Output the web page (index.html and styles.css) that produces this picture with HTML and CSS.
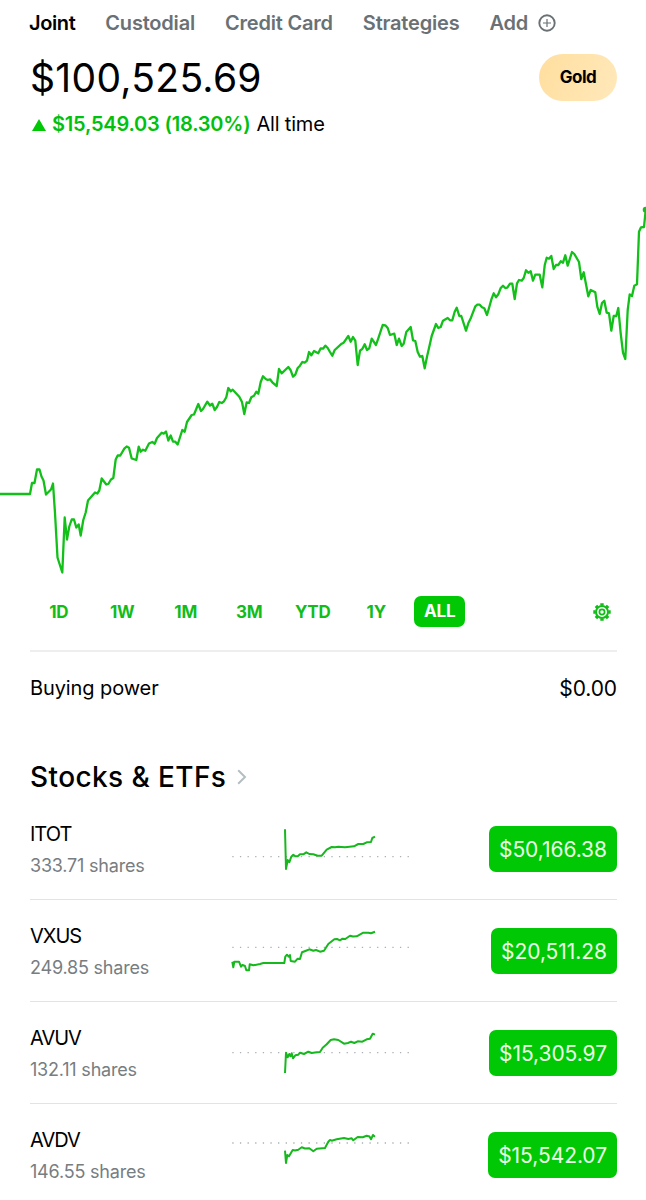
FILE: index.html
```html
<!DOCTYPE html>
<html lang="en">
<head>
  <meta charset="UTF-8">
  <meta name="viewport" content="width=device-width, initial-scale=1.0">
  <title>Portfolio</title>
  <link rel="stylesheet" href="styles.css">
</head>
<body>
  <nav class="tabs">
    <a class="tab active">Joint</a>
    <a class="tab">Custodial</a>
    <a class="tab">Credit Card</a>
    <a class="tab">Strategies</a>
    <a class="tab tab-add">Add
      <svg class="add-icon" viewBox="0 0 18 18">
        <circle cx="9" cy="9" r="7.7" stroke-width="1.9"/>
        <path d="M9 5v8M5 9h8" stroke-width="1.2"/>
      </svg>
    </a>
  </nav>

  <header class="balance">
    <h1 class="amount">$100,525.69</h1>
    <button class="gold-button">Gold</button>
  </header>
  <div class="change">
    <svg class="up-icon" viewBox="0 0 14 12"><path d="M7 0l7 12H0z"/></svg>
    <span class="gain">$15,549.03 (18.30%)</span>
    <span class="period">All time</span>
  </div>

  <svg class="chart" viewBox="0 142 646 448">
    <polyline points="0,494 30,494 32,483 34.5,483 37,469.5 39.5,469.5 41.5,476.5 43.5,480.5 46,494.5 51,489.5 53,483.5 55,513 57.5,557.5 62.3,572.5 64.7,517.5 67,539.5 69.3,526.5 71.7,519.5 74,519.5 76.3,527.5 78.7,524.5 80.7,535.5 83.3,520 85.7,512.5 88,500.5 95,492.5 97.3,493.5 99.3,490.5 101.7,478.5 106.3,484.5 108.3,484 111,479.5 113.3,478 115.7,459.5 117.7,455.5 120.3,455.5 124.3,448.7 126.7,446.5 129,447.7 131.7,458.5 136.3,460 138.7,446.7 140.7,451.7 143,449.7 145.3,450.7 149,443.5 152.3,442 154.7,443.7 157,438 161.7,432.7 163.7,433.7 166,431.5 168.3,440.5 170.7,435.5 173,441.7 175.3,441.7 177.7,444.5 182.3,430 184.7,431.7 187,422 191.7,415 194,414.5 198.3,404 201,411 203,409 207.3,401.7 210,405.5 212.3,403.7 214.7,410 217,407 219.3,402 221.7,403 224,401.3 226.3,397.3 228.3,388 230.7,391.3 232.7,389.7 239.3,396.7 242,402 244.3,414 246.7,402.3 249,403 251.3,397.3 254,395.7 256.3,391.7 258.3,393.7 260.7,382 263,376.3 265.7,379 267.7,380 270,379.3 272.3,382.3 276.7,386 279,369 281.7,373.3 288.3,367 290.7,370.3 293,376.7 295.3,374.7 297.7,368 300,365.7 302.3,362 304.7,362.7 307,360.7 309,352 311.3,355.3 314,351 318.3,353.3 320.7,348.3 323,348.7 325.3,345.7 327.7,348 330,352 332.3,355.7 334.7,350 341.7,343.7 343.7,342.7 348.3,336 350.7,341.7 353,337 355.3,340.7 357.7,365 360,350.7 362.3,349 364.7,344.3 367,350 369.3,348.3 371.7,338.7 376,345 378.3,338.3 382.7,325 385.3,325.3 387.7,328 390,335 394.3,333.7 396.7,345 399,338.7 401.7,346 403.7,343.7 406.3,332 410.7,327 413,340.3 415.3,341 417.7,352 420,356.7 422.3,356 424.7,368.3 427,356.7 429.3,346.7 431.7,336 436,324 438.3,328 440.7,327 443,320.7 447.7,318 450,320.3 452.3,320.3 454.7,311.7 456.7,307.7 459.3,316 461.3,316 466,330.7 468.3,323.3 471,317.7 475.3,306.3 477.3,304.7 479.7,304.7 482,307.3 484.3,308.3 487,315 489.3,307 491.3,299.7 493.7,293.3 496,297.3 498.3,294.3 500.7,288 503,285.7 505.3,288 507.3,287.7 510,283.7 512.3,283.7 514.7,299 517,283.3 519,280 521.7,280.7 523.7,278 526,270.3 528.3,272.7 530.7,271.3 533,280.7 535.3,274.7 539.7,274.7 542.3,287.3 544.7,265.3 546.7,257.7 549,258.7 551.3,256 553.7,269 556,265 558.3,265 560.7,261.3 563,262.7 565.3,255.3 567.7,265.7 572,252 574.3,254 579,262 581.3,279 583.7,272.3 586,284.3 588.3,296.3 590.7,290 595.3,292.3 597.3,306.7 599.7,314 602,303 604.3,300.7 606.7,312.7 609,313.3 611.3,330.7 613.7,316 616.3,316 618.3,308 620.7,333.3 623,352.7 625.3,359 627.7,310 629.7,294.3 632,296 634.3,285.7 637,284.3 639,231.7 641,227.3 644,227 645.7,210"/>
    <circle cx="645.7" cy="209.7" r="3"/>
  </svg>

  <div class="range-bar">
    <div class="ranges">
      <span class="range">1D</span>
      <span class="range">1W</span>
      <span class="range">1M</span>
      <span class="range">3M</span>
      <span class="range">YTD</span>
      <span class="range">1Y</span>
      <span class="range selected">ALL</span>
    </div>
    <svg class="gear" viewBox="-9 -9 18 18">
      <circle r="6" stroke-width="2"/>
      <circle r="2.6" stroke-width="1.7"/>
      <path stroke-width="3.4" d="M0-6.4v-2.3M0 6.4v2.3M6.4 0h2.3M-6.4 0h-2.3M4.5-4.5l1.6-1.6M-4.5-4.5l-1.6-1.6M4.5 4.5l1.6 1.6M-4.5 4.5l-1.6 1.6"/>
    </svg>
  </div>

  <div class="buying-power">
    <span>Buying power</span>
    <span class="cash">$0.00</span>
  </div>

  <h2 class="section-title">Stocks &amp; ETFs
    <svg class="chevron" viewBox="0 0 10 16"><path d="M1.2 1.2L8 8l-6.8 6.8"/></svg>
  </h2>

  <ul class="holdings">
    <li class="holding">
      <div class="info">
        <div class="symbol">ITOT</div>
        <div class="shares">333.71 shares</div>
      </div>
      <svg class="spark" viewBox="0 0 180 101">
        <path class="baseline" d="M2.3 58.7H179"/>
        <polyline points="55,31.3 56,71 57.7,62 59.3,64.3 61.3,58.7 63.3,56.7 65.3,58.3 67.7,58.3 70,56.3 73.3,56.3 76.3,54.3 79.3,56 83.3,56.3 87.7,57.7 91.7,57.7 96.7,51.7 101.7,49 105,49.3 108.3,48.7 115,49.3 124,48.3 128.3,46 133.3,46 136.7,44.3 141,44 142.3,40 145,38.7"/>
      </svg>
      <button class="price">$50,166.38</button>
    </li>
    <li class="holding">
      <div class="info">
        <div class="symbol">VXUS</div>
        <div class="shares">249.85 shares</div>
      </div>
      <svg class="spark" viewBox="0 0 180 101">
        <path class="baseline" d="M2.3 47.3H179"/>
        <polyline points="2.3,61.7 3.3,67.3 4.3,61.7 9,61.7 11,66.7 12.5,65 15,66 16.3,70.3 19,70.3 19.7,64.3 23.3,65.3 30,64 33.3,63 54.3,63 55.3,56.7 57,54.7 58.7,56.7 60,55 60.7,61 65,61.7 67.7,58.7 70,59 72,52.3 76,50.7 79.3,49.3 83.3,50.7 86,50 90,51.7 94,50.7 98.3,44 104.3,39.3 107,39 110,40.3 112.5,38.7 115.3,39 120,35.7 123,36.5 126.7,36.3 133.3,32.7 138.3,32.7 141,33.3 145,31.7"/>
      </svg>
      <button class="price">$20,511.28</button>
    </li>
    <li class="holding">
      <div class="info">
        <div class="symbol">AVUV</div>
        <div class="shares">132.11 shares</div>
      </div>
      <svg class="spark" viewBox="0 0 180 101">
        <path class="baseline" d="M2.3 50.7H179"/>
        <polyline points="55,71 56,50.7 57.7,55.3 59.3,52 60.5,54.3 61.7,51.3 63,56.3 65.3,53.3 68.3,52.7 70,50.7 74,52 78.3,49.7 81.7,51 86.7,50.3 90,50 92.7,45.7 96.7,42.3 100.7,38 104,37.3 108.3,38 114,41.7 118,41 121,39.7 124.3,41 127.7,39.3 132.3,39.7 136.7,37.3 140,36.7 142.7,31.7 145,32.7"/>
      </svg>
      <button class="price">$15,305.97</button>
    </li>
    <li class="holding">
      <div class="info">
        <div class="symbol">AVDV</div>
        <div class="shares">146.55 shares</div>
      </div>
      <svg class="spark" viewBox="0 0 180 101">
        <path class="baseline" d="M2.3 39H179"/>
        <polyline points="55,46.7 56,59 57.3,51 59,52.3 62.7,46 65,46.5 68.3,45.7 71.7,43.3 75,44.5 79.3,44.3 83.3,47.3 86.7,44.7 95,44 98.3,37.7 100,36 101.7,36.7 106.7,35.3 114,34 118.3,35 121.7,34.3 123.3,36.3 127.7,33 132.7,33.3 136.7,31.7 139.5,32.5 141,35.3 143,31 145,32.7"/>
      </svg>
      <button class="price">$15,542.07</button>
    </li>
  </ul>
</body>
</html>
```
FILE: styles.css
```css
* {
  box-sizing: border-box;
}

body {
  margin: 0;
  height: 1200px;
  overflow: hidden;
  background: #fff;
  color: #000;
  font-family: Inter, Roboto, sans-serif;
}

button {
  border: none;
  font-family: inherit;
}

/* Account tabs */
.tabs {
  display: flex;
  align-items: center;
  gap: 30px;
  height: 46px;
  padding: 0 29px;
}

.tab {
  color: #6a7174;
  font-size: 20px;
  font-weight: 600;
  letter-spacing: -0.2px;
  white-space: nowrap;
}

.tab.active {
  color: #000;
  letter-spacing: -0.4px;
}

.tab-add {
  display: flex;
  align-items: center;
  gap: 10px;
}

.add-icon {
  width: 18px;
  height: 18px;
  fill: none;
  stroke: #6a7174;
}

/* Balance */
.balance {
  display: flex;
  align-items: center;
  justify-content: space-between;
  height: 62px;
  padding: 0 29px 0 30px;
}

.amount {
  margin: 0;
  font-size: 39px;
  font-weight: 400;
  letter-spacing: 0.3px;
}

.gold-button {
  width: 78px;
  height: 47px;
  border-radius: 24px;
  background: linear-gradient(110deg, #ffdf9f, #ffe8ba);
  color: #000;
  font-size: 17px;
  font-weight: 700;
  letter-spacing: -0.5px;
}

.change {
  display: flex;
  align-items: center;
  height: 34px;
  padding: 0 32px 2px;
  font-size: 20px;
  letter-spacing: -0.2px;
}

.up-icon {
  width: 14px;
  height: 12px;
  margin: 2px 6px 0 0;
  fill: #00c805;
}

.gain {
  margin-right: 6px;
  color: #00c010;
  font-weight: 600;
}

/* Portfolio chart */
.chart {
  display: block;
  width: 646px;
  height: 448px;
  fill: none;
  stroke: #12c019;
  stroke-width: 2.3;
  stroke-linejoin: round;
}

.chart circle {
  fill: #12c019;
  stroke: none;
}

.range-bar {
  display: flex;
  align-items: center;
  justify-content: space-between;
  height: 62px;
  margin: 0 29px 0 30px;
  padding: 0 6px 17px 0;
  border-bottom: 2px solid #eee;
}

.ranges {
  display: grid;
  grid-template-columns: repeat(7, 63.5px);
  justify-items: center;
  align-items: center;
  margin-left: -3px;
}

.range {
  color: #12bc19;
  font-size: 17px;
  font-weight: 700;
  letter-spacing: -0.2px;
}

.range.selected {
  width: 51px;
  border-radius: 7px;
  background: #00c805;
  color: #fff;
  line-height: 31px;
  text-align: center;
}

.gear {
  width: 18px;
  height: 18px;
  fill: none;
  stroke: #12bc19;
}

.buying-power {
  display: flex;
  align-items: center;
  justify-content: space-between;
  height: 72px;
  padding: 0 29px 0 30px;
  font-size: 20px;
  letter-spacing: -0.1px;
}

.cash {
  font-size: 21px;
}

/* Holdings */
.section-title {
  display: flex;
  align-items: center;
  gap: 11px;
  height: 40px;
  margin: 33px 30px 1px;
  font-size: 28px;
  font-weight: 500;
  letter-spacing: 0.4px;
}

.chevron {
  width: 10px;
  height: 16px;
  fill: none;
  stroke: #b4bec2;
  stroke-width: 2;
}

.holdings {
  margin: 0;
  padding: 0 29px 0 30px;
  list-style: none;
}

.holding {
  display: flex;
  align-items: center;
  height: 102px;
  border-bottom: 1px solid #dfe4e8;
}

.info {
  width: 200px;
  padding-top: 3px;
}

.symbol {
  font-size: 20px;
  letter-spacing: -1px;
  line-height: 31px;
}

.shares {
  color: #777d81;
  font-size: 18px;
  letter-spacing: -0.2px;
  line-height: 31px;
}

.spark {
  width: 180px;
  height: 101px;
  fill: none;
  stroke: #16b81d;
  stroke-width: 2;
  stroke-linejoin: round;
}

.baseline {
  stroke: #aab0b4;
  stroke-width: 1.3;
  stroke-dasharray: 1.3 6.32;
}

.price {
  height: 46px;
  margin-left: auto;
  padding: 2px 10px 0;
  border-radius: 7px;
  background: #00c805;
  color: #eaffe5;
  font-size: 21px;
  letter-spacing: -0.05px;
}
```
